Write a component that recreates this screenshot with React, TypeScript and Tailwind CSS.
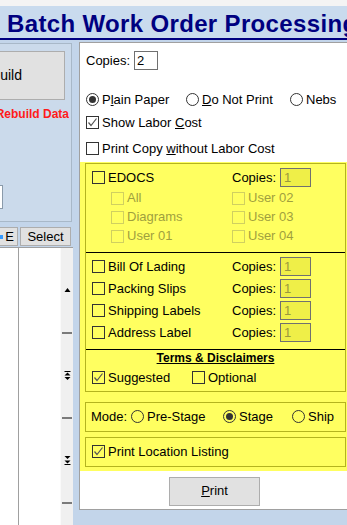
import React from "react";

const font = "font-['Liberation_Sans',Arial,sans-serif]";

function Check({ checked, disabled, onWhite }: { checked?: boolean; disabled?: boolean; onWhite?: boolean }) {
    return (
        <span
            className={`inline-flex w-[13px] h-[13px] shrink-0 items-center justify-center border ${disabled ? "border-[#d0d060]" : "border-[#333333]"} ${onWhite ? "bg-white" : "bg-transparent"}`}
        >
            {checked && (
                <svg width="11" height="11" viewBox="0 0 11 11">
                    <polyline points="1.5,5.5 4,8.5 9.5,1.5" fill="none" stroke="#555555" strokeWidth="1.2" />
                </svg>
            )}
        </span>
    );
}

function Radio({ selected }: { selected?: boolean }) {
    return (
        <span className="inline-flex w-[13px] h-[13px] shrink-0 items-center justify-center rounded-full border border-[#333333]">
            {selected && <span className="w-[7px] h-[7px] rounded-full bg-[#333333]" />}
        </span>
    );
}

function CopiesBox() {
    return (
        <div className="flex items-center">
            <span className="w-[48px]">Copies:</span>
            <span className="w-[31px] h-[19px] border border-[#707070] bg-[#efef48] text-[#9a9a3c] pl-[3px] leading-[17px]">1</span>
        </div>
    );
}

function DocRow({ label }: { label: string }) {
    return (
        <div className="flex items-center h-[22px]">
            <div className="flex items-center gap-[3px] w-[140px]">
                <Check />
                <span>{label}</span>
            </div>
            <CopiesBox />
        </div>
    );
}

function SubItem({ label }: { label: string }) {
    return (
        <div className="flex items-center gap-[3px] h-[19px] text-[#9f9f3e]">
            <Check disabled />
            <span>{label}</span>
        </div>
    );
}

function ScrollArrow({ kind }: { kind: "up" | "top" | "bottom" }) {
    return (
        <svg width="7" height="9" viewBox="0 0 7 9">
            {kind === "up" && <polygon points="3.5,2 6.5,6 0.5,6" fill="#000" />}
            {kind === "top" && (
                <>
                    <rect x="0.5" y="0" width="6" height="1" fill="#000" />
                    <polygon points="3.5,1.5 6.5,4.5 0.5,4.5" fill="#000" />
                    <polygon points="3.5,9 6.5,6 0.5,6" fill="#000" />
                </>
            )}
            {kind === "bottom" && (
                <>
                    <polygon points="0.5,0 6.5,0 3.5,3" fill="#000" />
                    <polygon points="0.5,4.5 6.5,4.5 3.5,7.5" fill="#000" />
                    <rect x="0.5" y="8" width="6" height="1" fill="#000" />
                </>
            )}
        </svg>
    );
}

function ScrollSegment({ kind }: { kind: "up" | "top" | "bottom" }) {
    return (
        <div className="h-[85px] flex flex-col">
            <div className="flex-1 flex items-center justify-center">
                <ScrollArrow kind={kind} />
            </div>
            <div className="h-[2px] mx-[1px] bg-[#7a7a7a]" />
        </div>
    );
}

export default function App() {
    return (
        <div className={`w-[347px] h-[525px] overflow-hidden bg-[#c3d5ea] text-[13px] text-black ${font}`}>
            <div className="h-[6px] bg-[#f4f4f4]" />
            <div className="h-[34px] bg-[#c9dbee] border-b-2 border-[#000080] flex items-center pl-[7px] pt-[3px]">
                <span className="text-[24px] font-bold text-[#000080] whitespace-nowrap tracking-[0.35px]">Batch Work Order Processing</span>
            </div>
            <div className="flex">
                {/* left column */}
                <div className="w-[79px] shrink-0 flex flex-col">
                    <div className="mt-[3px] w-[72px] h-[179px] border-t border-r border-b border-[#a8b8c8] bg-[#cbdaeb] flex flex-col">
                        <div className="mt-[7px] w-[65px] h-[49px] bg-[#e1e1e1] border border-[#adadad] border-l-0 flex items-center justify-end pr-[42px] text-[14px] whitespace-nowrap">
                            <span>Build</span>
                        </div>
                        <div className="mt-[5px] w-[69px] flex justify-end text-[12px] font-bold text-[#ff1a1a] whitespace-nowrap overflow-hidden">
                            Rebuild Data
                        </div>
                        <div className="mt-[62px] w-[3px] h-[24px] bg-white border border-l-0 border-[#8a9aaa]" />
                    </div>
                    <div className="mt-[5px] flex items-center h-[19px] gap-[2px]">
                        <div className="w-[18px] h-[19px] bg-[#e1e1e1] border border-[#adadad] border-l-0 flex items-center justify-end pr-[3px] relative">
                            <span className="absolute left-0 top-[7px] w-[3px] h-[4px] bg-[#3399ff]" />
                            E
                        </div>
                        <div className="w-[51px] h-[19px] bg-[#e1e1e1] border border-[#adadad] flex items-center justify-center">Select</div>
                    </div>
                    <div className="mt-[1px] w-[73px] h-[300px] bg-white border-t border-[#a0a0a0] flex">
                        <div className="w-[19px] border-r border-[#a0a0a0]" />
                        <div className="w-[41px]" />
                        <div className="w-[13px] bg-[#f0f0f0] border-l border-[#fafafa] flex flex-col pt-[1px]">
                            <ScrollSegment kind="up" />
                            <ScrollSegment kind="top" />
                            <ScrollSegment kind="bottom" />
                        </div>
                    </div>
                </div>

                {/* right panel */}
                <div className="mt-[2px] w-[275px] h-[468px] shrink-0 bg-white border border-[#a0a0a0] flex flex-col">
                    <div className="flex items-center mt-[8px] ml-[6px]">
                        <span className="w-[48px]">Copies:</span>
                        <span className="w-[24px] h-[19px] border border-[#707070] bg-white pl-[2px] leading-[17px]">2</span>
                    </div>
                    <div className="flex items-center h-[18px] mt-[20px] ml-[6px]">
                        <div className="flex items-center gap-[3px] w-[100px]">
                            <Radio selected />
                            <span>P<u>l</u>ain Paper</span>
                        </div>
                        <div className="flex items-center gap-[3px] w-[104px]">
                            <Radio />
                            <span><u>D</u>o Not Print</span>
                        </div>
                        <div className="flex items-center gap-[3px]">
                            <Radio />
                            <span>Nebs</span>
                        </div>
                    </div>
                    <div className="flex items-center gap-[3px] h-[18px] mt-[5px] ml-[6px]">
                        <Check checked onWhite />
                        <span>Show Labor <u>C</u>ost</span>
                    </div>
                    <div className="flex items-center gap-[3px] h-[18px] mt-[8px] ml-[6px]">
                        <Check onWhite />
                        <span>Print Copy <u>w</u>ithout Labor Cost</span>
                    </div>

                    <div className="mt-[4px] bg-[#ffff60] pl-[5px] pr-[7px] pt-[1px] pb-[4px] flex flex-col gap-[5px]">
                        <div className="border border-[#b4b41e] flex flex-col">
                            <div className="pt-[3px] px-[6px]">
                                <DocRow label="EDOCS" />
                                <div className="flex pl-[19px]">
                                    <div className="w-[121px]">
                                        <SubItem label="All" />
                                        <SubItem label="Diagrams" />
                                        <SubItem label="User 01" />
                                    </div>
                                    <div>
                                        <SubItem label="User 02" />
                                        <SubItem label="User 03" />
                                        <SubItem label="User 04" />
                                    </div>
                                </div>
                            </div>
                            <div className="mt-[6px] h-px bg-black" />
                            <div className="pt-[3px] px-[6px]">
                                <DocRow label="Bill Of Lading" />
                                <DocRow label="Packing Slips" />
                                <DocRow label="Shipping Labels" />
                                <DocRow label="Address Label" />
                            </div>
                            <div className="mt-[5px] h-px bg-black" />
                            <div className="h-[16px] flex items-center justify-center text-[12px] font-bold underline">
                                Terms &amp; Disclaimers
                            </div>
                            <div className="flex items-center h-[20px] mt-[2px] mb-[3px] px-[6px]">
                                <div className="flex items-center gap-[3px] w-[100px]">
                                    <Check checked />
                                    <span>Suggested</span>
                                </div>
                                <div className="flex items-center gap-[3px]">
                                    <Check />
                                    <span>Optional</span>
                                </div>
                            </div>
                        </div>

                        <div className="mt-[5px] h-[30px] border border-[#b4b41e] flex items-center pl-[5px]">
                            <span className="w-[40px]">Mode:</span>
                            <div className="flex items-center gap-[3px] w-[92px]">
                                <Radio />
                                <span>Pre-Stage</span>
                            </div>
                            <div className="flex items-center gap-[3px] w-[69px]">
                                <Radio selected />
                                <span>Stage</span>
                            </div>
                            <div className="flex items-center gap-[3px]">
                                <Radio />
                                <span>Ship</span>
                            </div>
                        </div>

                        <div className="h-[30px] border border-[#b4b41e] flex items-center gap-[3px] pl-[6px]">
                            <Check checked />
                            <span>Print Location Listing</span>
                        </div>
                    </div>

                    <div className="mt-[6px] ml-[89px] w-[91px] h-[29px] bg-[#e1e1e1] border border-[#adadad] flex items-center justify-center">
                        <span><u>P</u>rint</span>
                    </div>
                </div>
            </div>
        </div>
    );
}
